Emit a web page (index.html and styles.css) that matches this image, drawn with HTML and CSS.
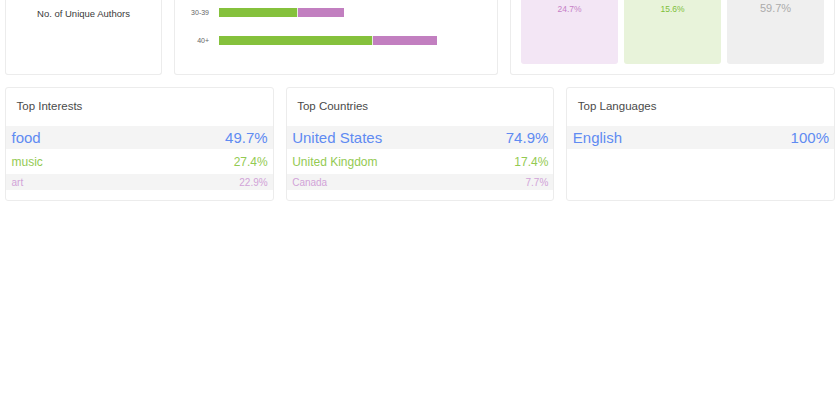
FILE: index.html
```html
<!DOCTYPE html>
<html>
<head>
<meta charset="utf-8">
<link rel="stylesheet" href="styles.css">
</head>
<body>
<div class="page">
  <div class="top-row">
    <div class="card authors">
      <div class="authors-label">No. of Unique Authors</div>
    </div>
    <div class="card ages">
      <div class="age-row">
        <span class="age-label">30-39</span>
        <span class="bar">
          <span class="seg green" style="width:79px"></span><span class="seg purple" style="width:46px"></span>
        </span>
      </div>
      <div class="age-row">
        <span class="age-label">40+</span>
        <span class="bar">
          <span class="seg green" style="width:154px"></span><span class="seg purple" style="width:64px"></span>
        </span>
      </div>
    </div>
    <div class="card gender">
      <div class="gbox pink"><span>24.7%</span></div>
      <div class="gbox lgreen"><span>15.6%</span></div>
      <div class="gbox grey"><span>59.7%</span></div>
    </div>
  </div>
  <div class="bottom-row">
    <div class="card list">
      <div class="list-title">Top Interests</div>
      <div class="item r1"><span>food</span><span>49.7%</span></div>
      <div class="item r2"><span>music</span><span>27.4%</span></div>
      <div class="item r3"><span>art</span><span>22.9%</span></div>
    </div>
    <div class="card list">
      <div class="list-title">Top Countries</div>
      <div class="item r1"><span>United States</span><span>74.9%</span></div>
      <div class="item r2"><span>United Kingdom</span><span>17.4%</span></div>
      <div class="item r3"><span>Canada</span><span>7.7%</span></div>
    </div>
    <div class="card list">
      <div class="list-title">Top Languages</div>
      <div class="item r1"><span>English</span><span>100%</span></div>
    </div>
  </div>
</div>
</body>
</html>
```
FILE: styles.css
```css
html, body {
  margin: 0;
  padding: 0;
  background: #fff;
}
body {
  font-family: "Liberation Sans", Arial, sans-serif;
  color: #333;
}
.page {
  padding: 0 5px;
  width: 830px;
}
.card {
  background: #fff;
  border: 1px solid #ececec;
  border-radius: 3px;
  box-sizing: border-box;
}
.top-row {
  display: grid;
  grid-template-columns: 157px 324px 1fr;
  gap: 12px;
  height: 75px;
}
.top-row .card {
  border-top: none;
  border-radius: 0 0 3px 3px;
}
.authors {
  text-align: center;
}
.authors-label {
  font-size: 9.5px;
  color: #3a3a3a;
  padding-top: 8px;
  line-height: 11px;
}
.ages {
  padding-top: 3px;
}
.age-row {
  display: flex;
  align-items: center;
  height: 19px;
  margin-bottom: 9px;
}
.age-label {
  width: 34px;
  text-align: right;
  font-size: 7px;
  color: #666;
  margin-right: 10px;
}
.bar {
  display: flex;
  height: 9px;
}
.seg {
  display: block;
  height: 9px;
}
.seg.green {
  background: #85c13c;
  border-right: 1px solid #e6f0dc;
  box-sizing: border-box;
}
.seg.purple {
  background: #c27fc0;
}
.gender {
  display: grid;
  grid-template-columns: repeat(3, 1fr);
  gap: 6px;
  padding: 0 10px 10px;
}
.gbox {
  border-radius: 0 0 3px 3px;
  text-align: center;
  padding-top: 4px;
  line-height: 11px;
}
.gbox.pink {
  background: #f3e6f5;
  color: #c67fc6;
  font-size: 8.5px;
}
.gbox.lgreen {
  background: #e8f3da;
  color: #7fbf3b;
  font-size: 8.5px;
}
.gbox.grey {
  background: #efefef;
  color: #ababab;
  font-size: 11px;
  padding-top: 3px;
}
.bottom-row {
  display: grid;
  grid-template-columns: repeat(3, 1fr);
  gap: 12px;
  margin-top: 12px;
}
.list {
  padding-bottom: 10px;
}
.list-title {
  height: 38px;
  line-height: 36px;
  padding-left: 10.5px;
  font-size: 11.5px;
  color: #4a4a4a;
}
.item {
  display: flex;
  justify-content: space-between;
  align-items: center;
  padding: 0 5px 0 5.5px;
}
.item.r1 {
  height: 23px;
  background: #f4f4f4;
  font-size: 15px;
  color: #5f8bf2;
}
.item.r2 {
  height: 25px;
  font-size: 12px;
  color: #93ca52;
}
.item.r3 {
  height: 16px;
  background: #f4f4f4;
  font-size: 10px;
  color: #d1a3d8;
}
```
